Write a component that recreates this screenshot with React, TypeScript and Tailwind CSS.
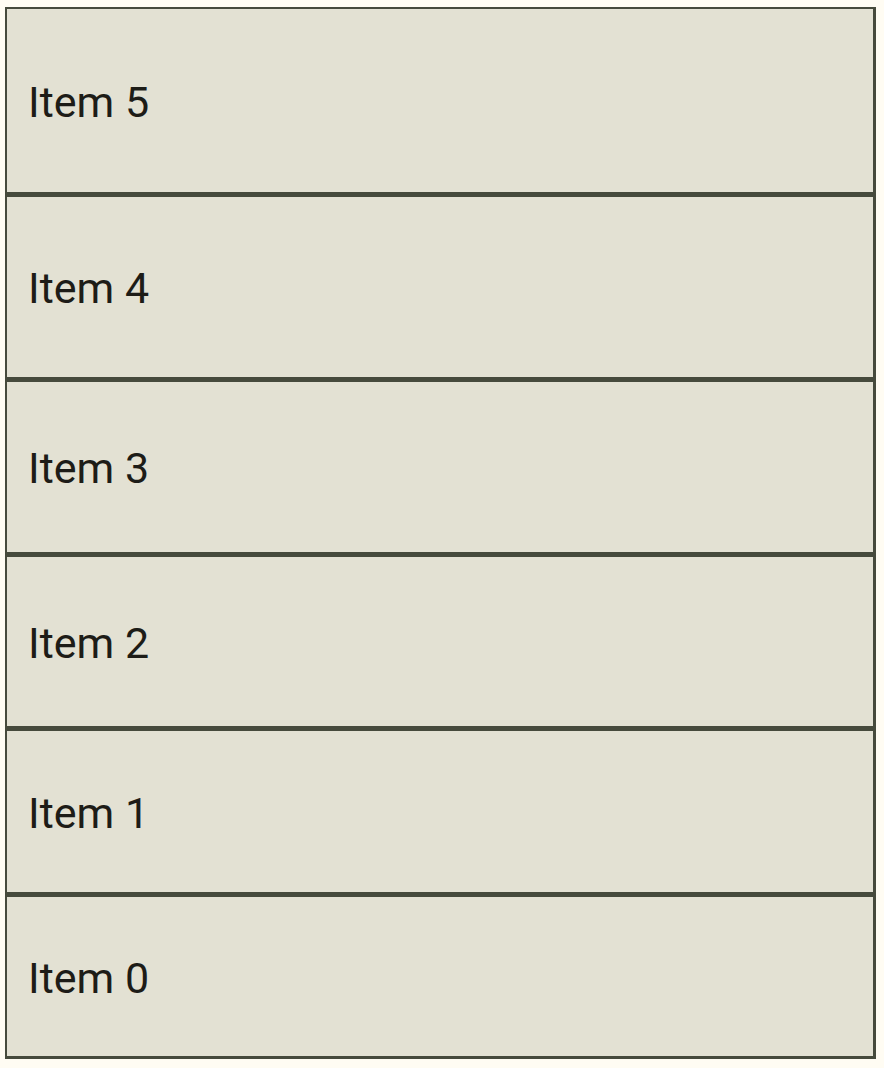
import React from "react";

const items = [
  { label: "Item 5", h: "h-[188px]" },
  { label: "Item 4", h: "h-[185px]" },
  { label: "Item 3", h: "h-[175px]" },
  { label: "Item 2", h: "h-[174px]" },
  { label: "Item 1", h: "h-[166px]" },
  { label: "Item 0", h: "h-[164px]" },
];

export default function App() {
  return (
    <div className="min-h-[1068px] w-full bg-[#fffcf3] pt-[7px] pl-[5px] pr-[8px]" style={{ fontFamily: "Roboto, sans-serif" }}>
      <div className="flex w-[871px] flex-col">
        {items.map((it) => (
          <div
            key={it.label}
            className={`flex ${it.h} items-center border-t-2 border-l-2 border-r-[3px] border-b-[3px] border-[#464a3c] bg-[#e3e1d3] pl-[21px] pt-[3px] text-[43px] text-[#1d1c17]`}
          >
            {it.label}
          </div>
        ))}
      </div>
    </div>
  );
}
